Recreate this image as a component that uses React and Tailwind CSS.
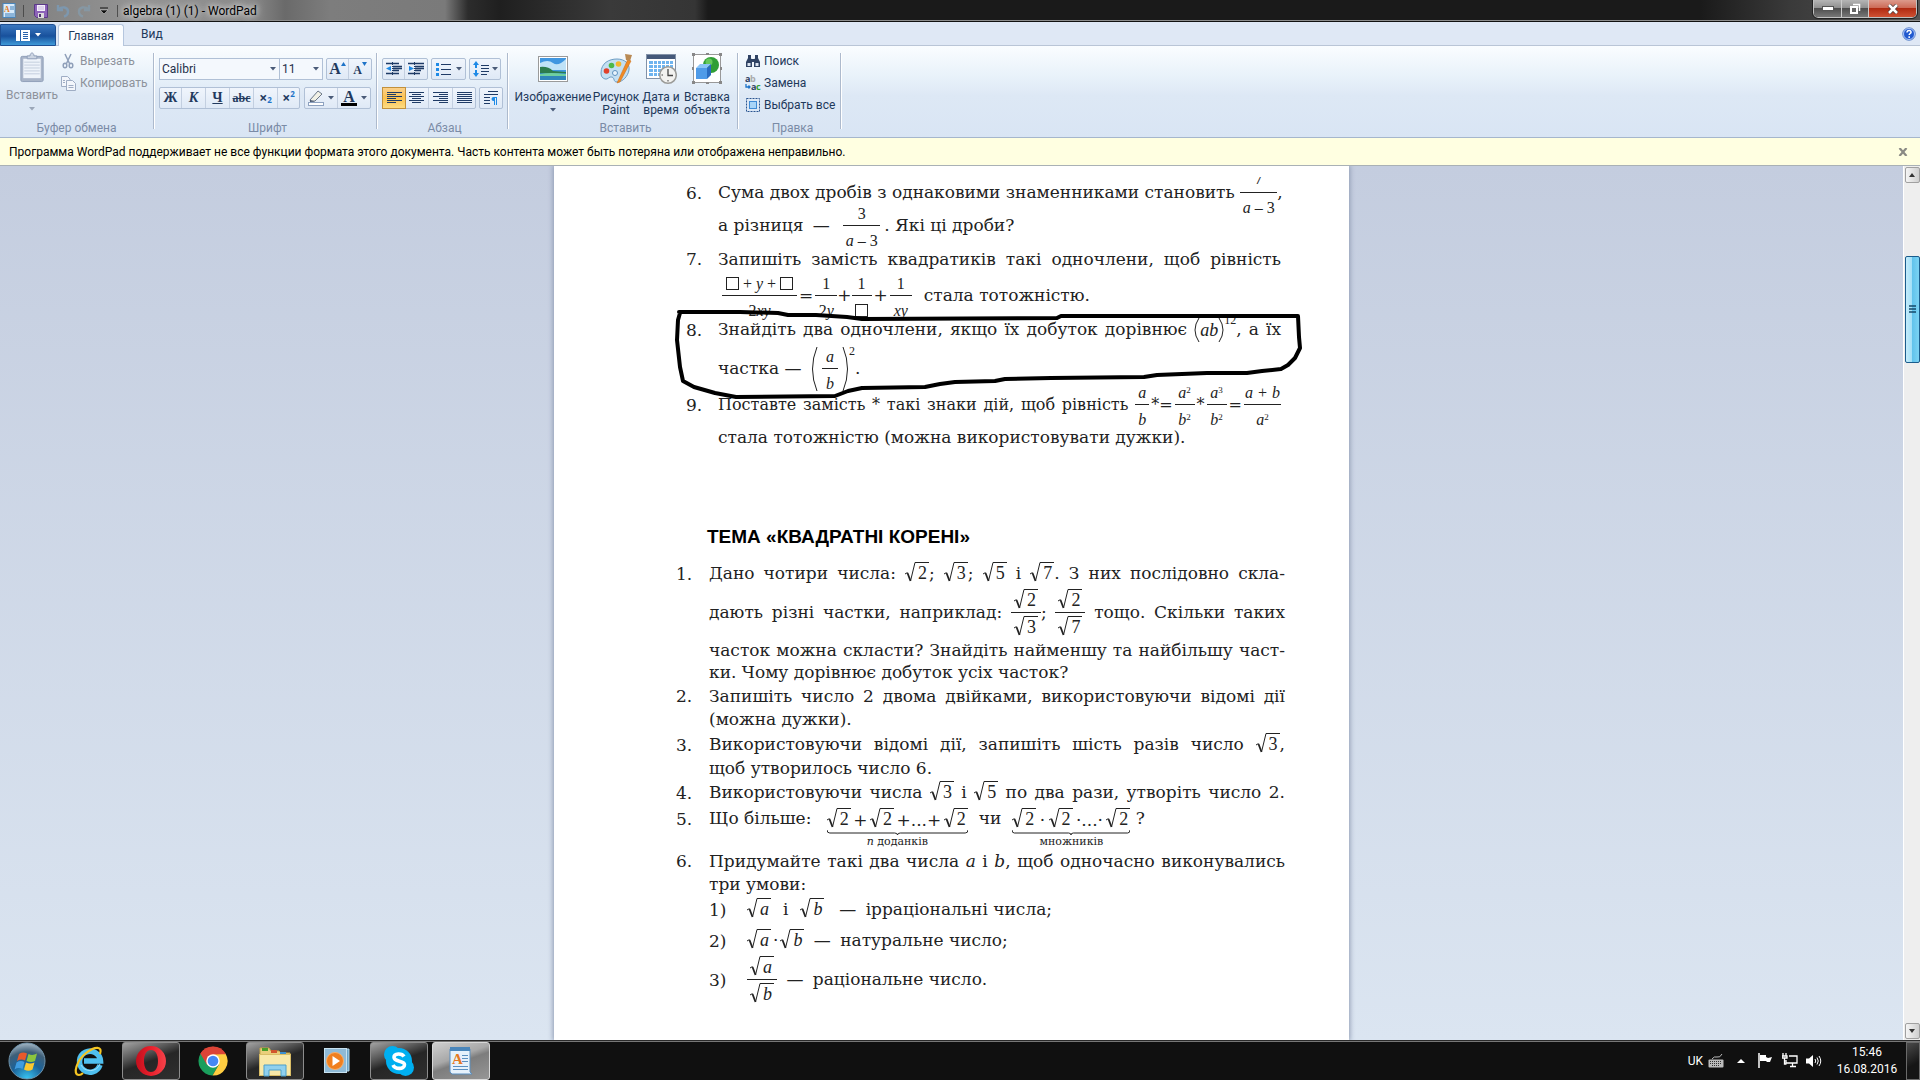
const INK = "M679 312 L740 312 L778 313 L788 315 L816 315 L847 317 L862 319 L1057 318 L1061 316 L1298 316 L1299 337 L1300 348 L1295 358 L1288 365 L1281 369 L1262 371 L1247 373 L1207 373 L1157 375 L1144 377 L1051 378 L1005 379 L995 381 L955 382 L940 384 L925 387 L862 388 L848 391 L835 396 L736 397 L715 393 L694 387 L683 381 L680 367 L677 340 L678 320 L680 313"

function Caret({ className = "text-[#4a5b78]" }) {
  return (
    <svg viewBox="0 0 6 4" className={`w-[6px] h-1 shrink-0 ${className}`}>
      <path d="M0 0h6L3 3.6z" fill="currentColor" />
    </svg>
  )
}

/* ---------- title bar ---------- */

function TitleBar() {
  return (
    <header className="h-[22px] shrink-0 flex items-start justify-between border-b border-[#111] shadow-[inset_0_-1px_0_#8d8d8d] bg-[linear-gradient(90deg,#7d7d7d_0px,#949494_140px,#8a8a8a_250px,#6a6a6a_285px,#7d7d7d_330px,#7a7a7a_445px,#2c2c2c_468px,#1f1f1f_500px,#3a3a3a_610px,#353535_695px,#1a1a1a_708px,#1a1a1a_1700px,#3a3a3a_1790px,#555_1920px)]">
      <div className="flex items-center h-[22px] pl-[2px]">
        <svg viewBox="0 0 14 16" className="w-[14px] h-4">
          <rect x="1" y="0.5" width="12" height="14" fill="#d9ebfa" stroke="#4a86bb" />
          <text x="2" y="9" fontSize="8" fontFamily="Liberation Serif" fontWeight="bold" fill="#e07b28">A</text>
          <path d="M8 4h4M8 6h4M3 11h9M3 13h9" stroke="#3f7fb9" />
        </svg>
        <div className="w-px h-3 bg-[#4c4c4c] ml-[7px]" />
        <button aria-label="Сохранить" className="ml-[10px]">
          <svg viewBox="0 0 14 14" className="w-[14px] h-[14px]">
            <path d="M0.5 0.5h13v13h-11l-2-2z" fill="#8d63b8" stroke="#5b3a87" />
            <rect x="3" y="1" width="8" height="6" fill="#f3eefa" />
            <path d="M4 3h6M4 5h6" stroke="#c9b7df" />
            <rect x="4" y="9" width="6" height="5" fill="#ddd" />
            <rect x="5" y="10" width="2" height="3" fill="#4c3370" />
          </svg>
        </button>
        <button aria-label="Отменить" className="ml-2">
          <svg viewBox="0 0 14 14" className="w-[14px] h-[14px]" fill="none" stroke="#7d97ae" strokeWidth="2.4">
            <path d="M2 1v5h5M2.500 5.500C6 2 12 3 12 7.500c0 2.500-2 4.500-4 5" />
          </svg>
        </button>
        <button aria-label="Вернуть" className="ml-[7px]">
          <svg viewBox="0 0 14 14" className="w-[14px] h-[14px]" fill="none" stroke="#8697a3" strokeWidth="2.4">
            <path d="M12 1v5H7M11.500 5.500C8 2 2 3 2 7.500c0 2.500 2 4.500 4 5" />
          </svg>
        </button>
        <button aria-label="Настройка панели" className="ml-[9px]">
          <svg viewBox="0 0 8 8" className="w-2 h-2">
            <path d="M0 1h8" stroke="#111" />
            <path d="M0 3h8L4 7z" fill="#111" stroke="#ddd" strokeWidth="0.500" />
          </svg>
        </button>
        <div className="w-px h-3 bg-[#4c4c4c] ml-[9px]" />
        <h1 className="ml-[5px] text-xs text-black [text-shadow:0_0_6px_#fff,0_0_8px_#ccc]">algebra (1) (1) - WordPad</h1>
      </div>
      <div className="flex h-[18px] mr-[3px] border border-t-0 border-[#c0c0c0] rounded-b-[5px] overflow-hidden outline outline-[#222]">
        <button aria-label="Свернуть" className="w-[28px] flex justify-center items-center bg-[linear-gradient(#b5b5b5,#8e8e8e_48%,#4e4e4e_50%,#777)] border-r border-[#ccc]">
          <svg viewBox="0 0 12 5" className="w-3 h-[5px]"><rect x="0.500" y="0.500" width="11" height="4" fill="#fff" stroke="#555" /></svg>
        </button>
        <button aria-label="Восстановить" className="w-[27px] flex justify-center items-center bg-[linear-gradient(#b5b5b5,#8e8e8e_48%,#4e4e4e_50%,#777)] border-r border-[#ccc]">
          <svg viewBox="0 0 12 12" className="w-3 h-3">
            <path d="M4 1.500h6.500v6.500" fill="none" stroke="#fff" strokeWidth="1.500" />
            <rect x="2" y="4" width="6" height="6" fill="#666" stroke="#fff" strokeWidth="2" />
          </svg>
        </button>
        <button aria-label="Закрыть" className="w-[47px] flex justify-center items-center bg-[linear-gradient(#dc9a8c,#cd6b58_45%,#b02a12_50%,#cf5133)]">
          <svg viewBox="0 0 12 10" className="w-3 h-[10px]">
            <path d="M2 1l8 8M10 1L2 9" stroke="#4a3a3a" strokeWidth="4" />
            <path d="M2 1l8 8M10 1L2 9" stroke="#fff" strokeWidth="2.500" />
          </svg>
        </button>
      </div>
    </header>
  )
}

/* ---------- ribbon ---------- */

function Tabs() {
  return (
    <nav className="h-[24px] shrink-0 flex items-end bg-[#dfe8f5] border-b border-[#b9c5d6] text-xs text-[#1e395b]">
      <button aria-label="Меню" className="w-14 h-[22px] mb-[-1px] flex items-center justify-center gap-[5px] rounded-tr-[3px] border border-[#1d4f93] bg-[linear-gradient(#3a77bf,#1c55a0_50%,#17509c_55%,#3f9ad8)]">
        <svg viewBox="0 0 14 11" className="w-[14px] h-[11px]">
          <rect width="14" height="11" fill="#fff" />
          <path d="M4.500 0v11" stroke="#2a62ab" />
          <path d="M7 2.500h5M7 4.500h5M7 6.500h5M7 8.500h5" stroke="#2a62ab" />
        </svg>
        <Caret className="text-white" />
      </button>
      <button className="w-[66px] h-[22px] mb-[-1px] ml-[2px] bg-[#fbfdff] border border-b-0 border-[#b5c6de] rounded-t-[3px]">Главная</button>
      <button className="ml-[17px] h-[22px]">Вид</button>
      <button aria-label="Справка" className="ml-auto mr-1 mb-1">
        <svg viewBox="0 0 14 14" className="w-[14px] h-[14px]">
          <circle cx="7" cy="7" r="6.300" fill="#2159cf" stroke="#6f93cf" />
          <circle cx="7" cy="7" r="5.500" fill="none" stroke="#cfe0ff" strokeWidth="0.800" />
          <path d="M5 5.500c0-3 4.500-2.500 4 0C8.800 6.600 7.200 6.500 7.200 8" fill="none" stroke="#fff" strokeWidth="1.500" />
          <rect x="6.400" y="9.300" width="1.600" height="1.600" fill="#fff" />
        </svg>
      </button>
    </nav>
  )
}

function Group({ title, className, children }) {
  return (
    <section className="flex">
      <div className={`flex flex-col justify-between pt-[6px] pb-[1px] ${className}`}>
        <div className="flex-1">{children}</div>
        <h2 className="text-center text-xs leading-4 text-[#7a8ba6]">{title}</h2>
      </div>
      <div className="w-[2px] mt-[7px] mb-2 bg-[#adbacd] border-r border-white" />
    </section>
  )
}

function ButtonBox({ children }) {
  return (
    <div className="flex h-[22px] border border-[#b0c0d6] rounded-[2px] bg-[linear-gradient(#f0f5fc,#dfe9f6)] divide-x divide-[#c3cfe0]">
      {children}
    </div>
  )
}

function Tool({ label, className, children }) {
  return (
    <button aria-label={label} className={`flex items-center justify-center text-[#233a5e] ${className}`}>
      {children}
    </button>
  )
}

function LinesIcon({ rows }) {
  return (
    <svg viewBox="0 0 15 12" className="w-[15px] h-3">
      <path d={rows} stroke="#1f3b66" />
    </svg>
  )
}

function ClipboardGroup() {
  return (
    <Group title="Буфер обмена" className="w-[153px]">
      <div className="flex items-start text-xs text-[#8d929b]">
        <button className="w-[52px] ml-[6px] flex flex-col items-center gap-1">
          <svg viewBox="0 0 26 32" className="w-[26px] h-[31px]">
            <rect x="1.500" y="4.500" width="23" height="26" rx="1.500" fill="#a9b5c9" stroke="#8f9fb9" />
            <rect x="4" y="7" width="18" height="20" fill="#eef3fa" />
            <path d="M5 10.500h16M5 13.500h16M5 16.500h16M5 19.500h16M5 22.500h16" stroke="#c3cddd" />
            <path d="M8 7V4h3c0-4 4-4 4 0h3v3z" fill="#ccd5e3" stroke="#8f9fb9" />
          </svg>
          <span className="leading-4">Вставить</span>
          <Caret className="text-[#9aa6b8]" />
        </button>
        <div className="flex flex-col gap-[6px] ml-[3px]">
          <button className="flex items-center gap-[5px] h-4 mt-[1px]">
            <svg viewBox="0 0 14 16" className="w-[14px] h-4" fill="none" stroke="#8f9fb9" strokeWidth="1.500">
              <path d="M4 1l4.500 9.500M10 1L5.500 10.500" />
              <ellipse cx="4" cy="12.500" rx="1.800" ry="2.300" />
              <ellipse cx="10" cy="12.500" rx="1.800" ry="2.300" />
            </svg>
            Вырезать
          </button>
          <button className="flex items-center gap-[4px] h-4">
            <svg viewBox="0 0 15 15" className="w-[15px] h-[15px]" fill="#f3f6fb" stroke="#9fadc4">
              <path d="M0.500 0.500h6l2.500 2.500v7.500h-8.500z" />
              <path d="M5.500 4.500h6l3 3v7h-9z" />
              <path d="M7.500 9.500h5M7.500 11.500h5M2 4.500h2M2 6.500h2" />
            </svg>
            Копировать
          </button>
        </div>
      </div>
    </Group>
  )
}

function FontGroup() {
  return (
    <Group title="Шрифт" className="w-[221px] pl-1">
      <div className="flex flex-col gap-[7px] pt-[6px]">
        <div className="flex h-[22px]">
          <label className="relative flex items-center">
            <select aria-label="Семейство шрифтов" className="appearance-none w-[121px] h-[22px] pl-[2px] border border-[#b0c0d6] bg-[#f4f8fd] text-xs text-[#1e2f4a]">
              <option>Calibri</option>
            </select>
            <span className="absolute right-1"><Caret /></span>
          </label>
          <label className="relative flex items-center ml-[-1px]">
            <select aria-label="Размер шрифта" className="appearance-none w-[44px] h-[22px] pl-[2px] border border-[#b0c0d6] bg-[#f4f8fd] text-xs text-[#1e2f4a]">
              <option>11</option>
            </select>
            <span className="absolute right-1"><Caret /></span>
          </label>
          <div className="ml-[3px]">
            <ButtonBox>
              <Tool label="Увеличить шрифт" className="w-[22px] items-start">
                <span className="font-[Liberation_Serif] font-bold text-base leading-[20px]">A</span>
                <svg viewBox="0 0 5 4" className="w-[5px] h-1 mt-[3px]"><path d="M0 4h5L2.500 0z" fill="#1e73c8" /></svg>
              </Tool>
              <Tool label="Уменьшить шрифт" className="w-[22px] items-start">
                <span className="font-[Liberation_Serif] font-bold text-xs leading-[22px]">A</span>
                <svg viewBox="0 0 5 4" className="w-[5px] h-1 mt-[3px]"><path d="M0 0h5L2.500 4z" fill="#1e73c8" /></svg>
              </Tool>
            </ButtonBox>
          </div>
        </div>
        <div className="flex gap-1 font-[Liberation_Serif] font-bold text-sm">
          <ButtonBox>
            <Tool label="Полужирный" className="w-[22px]">Ж</Tool>
            <Tool label="Курсив" className="w-6 italic">К</Tool>
            <Tool label="Подчеркнутый" className="w-6 underline">Ч</Tool>
            <Tool label="Зачеркнутый" className="w-6 line-through text-xs">abc</Tool>
            <Tool label="Подстрочный" className="w-6 font-[Open_Sans]">×<sub className="text-[8px] text-[#1e73c8]">2</sub></Tool>
            <Tool label="Надстрочный" className="w-[21px] font-[Open_Sans]">×<sup className="text-[8px] text-[#1e73c8]">2</sup></Tool>
          </ButtonBox>
          <ButtonBox>
            <Tool label="Выделение текста" className="w-[33px] gap-1">
              <svg viewBox="0 0 16 16" className="w-4 h-4">
                <path d="M2 10L10 1l4 3-7 7-4 1z" fill="#f1f1e6" stroke="#6b7788" />
                <path d="M2 10l5 1-5 1z" fill="#44556e" />
                <rect x="0.500" y="12.500" width="15" height="3" fill="#fff" stroke="#8ea2c0" />
              </svg>
              <Caret />
            </Tool>
            <Tool label="Цвет текста" className="w-[32px] gap-1">
              <span className="text-base leading-[13px] w-4 border-b-[3px] border-black">A</span>
              <Caret />
            </Tool>
          </ButtonBox>
        </div>
      </div>
    </Group>
  )
}

function ParagraphGroup() {
  return (
    <Group title="Абзац" className="w-[129px] pl-1">
      <div className="flex flex-col gap-[7px] pt-[6px]">
        <div className="flex gap-[3px]">
          <ButtonBox>
            <Tool label="Уменьшить отступ" className="w-[22px]">
              <svg viewBox="0 0 16 14" className="w-4 h-[14px]">
                <path d="M0 1.500h13M7 4.500h9M7 6.500h9M7 8.500h6M0 11.500h13" stroke="#1f3b66" strokeWidth="1.500" />
                <path d="M6.500 0v14" stroke="#1f3b66" strokeDasharray="1 1" />
                <path d="M5 4v5L0 6.500z" fill="#1e8ae6" />
              </svg>
            </Tool>
            <Tool label="Увеличить отступ" className="w-[22px]">
              <svg viewBox="0 0 16 14" className="w-4 h-[14px]">
                <path d="M0 1.500h16M7 4.500h9M7 6.500h9M7 8.500h6M0 11.500h12" stroke="#1f3b66" strokeWidth="1.500" />
                <path d="M6.500 0v14" stroke="#1f3b66" strokeDasharray="1 1" />
                <path d="M1 4v5l5-2.500z" fill="#1e8ae6" />
              </svg>
            </Tool>
          </ButtonBox>
          <ButtonBox>
            <Tool label="Маркеры" className="w-[33px] gap-1">
              <svg viewBox="0 0 16 13" className="w-4 h-[13px]">
                <path d="M5 1.500h10M5 6.500h10M5 11.500h10" stroke="#1f3b66" />
                <path d="M0 1.500h3M0 6.500h3M0 11.500h3" stroke="#1e8ae6" strokeWidth="3" />
              </svg>
              <Caret />
            </Tool>
          </ButtonBox>
          <ButtonBox>
            <Tool label="Междустрочный интервал" className="w-[30px] gap-[3px]">
              <svg viewBox="0 0 16 16" className="w-4 h-4">
                <path d="M3 0l3 4H4v8h2l-3 4-3-4h2V4H0z" fill="#1e8ae6" />
                <rect x="0" y="7" width="6" height="2" fill="#e8f0fa" />
                <path d="M8 4.500h8M8 7.500h8M8 10.500h8M8 13.500h6" stroke="#1f3b66" />
              </svg>
              <Caret />
            </Tool>
          </ButtonBox>
        </div>
        <div className="flex gap-[3px]">
          <ButtonBox>
            <Tool label="По левому краю" className="w-[24px] m-[-1px] border border-[#c2913c] bg-[linear-gradient(#fbd08a,#fcc250_50%,#fddc82)]">
              <LinesIcon rows="M0 .5h15M0 2.500h9M0 4.500h15M0 6.500h9M0 8.500h15M0 10.500h9" />
            </Tool>
            <Tool label="По центру" className="w-6">
              <LinesIcon rows="M0 .5h15M3 2.500h9M0 4.500h15M3 6.500h9M0 8.500h15M3 10.500h9" />
            </Tool>
            <Tool label="По правому краю" className="w-6">
              <LinesIcon rows="M0 .5h15M6 2.500h9M0 4.500h15M6 6.500h9M0 8.500h15M6 10.500h9" />
            </Tool>
            <Tool label="По ширине" className="w-[22px]">
              <LinesIcon rows="M0 .5h15M0 2.500h15M0 4.500h15M0 6.500h15M0 8.500h15M0 10.500h15" />
            </Tool>
          </ButtonBox>
          <ButtonBox>
            <Tool label="Абзац" className="w-[22px]">
              <svg viewBox="0 0 14 14" className="w-[14px] h-[14px]">
                <path d="M4 .5h10M0 3.500h14M0 6.500h6M0 9.500h6M0 12.500h6" stroke="#1f3b66" />
                <path d="M13 6H9.500a2 2 0 000 4h.5v4h1V7h1v7h1z" fill="#1e8ae6" />
              </svg>
            </Tool>
          </ButtonBox>
        </div>
      </div>
    </Group>
  )
}

function BigButton({ icon, lines, caret, className }) {
  return (
    <button className={`flex flex-col items-center gap-1 text-[#1e395b] ${className}`}>
      {icon}
      <span className="text-xs leading-[13px] pt-[2px]">
        {lines.map(line => (
          <span key={line} className="block whitespace-nowrap">{line}</span>
        ))}
      </span>
      {caret && <Caret />}
    </button>
  )
}

function PictureIcon() {
  return (
    <svg viewBox="0 0 32 32" className="w-8 h-8">
      <rect x="1.500" y="3.500" width="29" height="25" fill="#fff" stroke="#9a9a9a" />
      <rect x="3" y="5" width="26" height="22" fill="#3f96e0" />
      <path d="M3 10q8-4 13 0t13-4v11H3z" fill="#bfe2f7" />
      <path d="M3 14q8-1 13 4l13 1v2H3z" fill="#2c7c4e" />
      <rect x="3" y="20" width="26" height="7" fill="#2f86bb" />
      <path d="M3 21q10-2 26 0v2H3z" fill="#6fcf9f" />
    </svg>
  )
}

function PaletteIcon() {
  return (
    <svg viewBox="0 0 32 32" className="w-8 h-8">
      <path d="M1 20C1 10 9 6 17 6s13 5 12 11-6 12-12 12c-4 0-2-4-5-5s-4 3-7 2-4-3-4-6z" fill="#c3dff2" stroke="#6c9dc4" />
      <circle cx="6.500" cy="18" r="2.800" fill="#e0402a" />
      <circle cx="11.500" cy="12.500" r="2.800" fill="#4db848" />
      <circle cx="18.500" cy="11" r="2.800" fill="#f4b72e" />
      <circle cx="15" cy="20" r="2.500" fill="#e9f4fc" stroke="#5f93c0" />
      <path d="M28 6L17 30l3-1L31 8z" fill="#f08a24" stroke="#c96a14" strokeWidth="0.500" />
      <path d="M25 1l7 1-2 6-4-1z" fill="#b98a54" />
    </svg>
  )
}

function CalendarIcon() {
  return (
    <svg viewBox="0 0 32 32" className="w-8 h-8">
      <rect x="1.500" y="1.500" width="29" height="24" fill="#fff" stroke="#8292a8" />
      <rect x="2" y="2" width="28" height="4" fill="#44597a" />
      <rect x="4" y="8" width="24" height="15" fill="#6fb4ef" />
      <path d="M4 11.500h24M4 15.500h24M4 19.500h24M8.500 8v15M12.500 8v15M16.500 8v15M20.500 8v15M24.500 8v15" stroke="#fff" />
      <circle cx="23" cy="22" r="8.300" fill="#f2f2f0" stroke="#9b9b98" strokeWidth="1.500" />
      <path d="M23 16v6.500h5" fill="none" stroke="#444" strokeWidth="1.300" />
      <path d="M16.500 22h1.500M23 27v1.500" stroke="#444" />
    </svg>
  )
}

function ObjectIcon() {
  return (
    <svg viewBox="0 0 32 32" className="w-8 h-8">
      <rect x="2.500" y="1.500" width="27" height="28" fill="#fff" stroke="#999" />
      <path d="M1 0h3v3H1zM28 0h3v3h-3zM1 28h3v3H1zM28 28h3v3h-3zM15 0h3v2h-3zM15 29h3v2h-3zM1 14h2v3H1zM29 14h2v3h-2z" fill="#888" />
      <circle cx="20" cy="12" r="8" fill="#2f9e36" />
      <circle cx="18" cy="9" r="3.500" fill="#66c95c" />
      <path d="M5 15l4-4h11l-4 4z" fill="#8ac4f7" />
      <rect x="5" y="15" width="11" height="11" fill="#4f9be8" />
      <path d="M16 15l4-4v11l-4 4z" fill="#2a6cc0" />
    </svg>
  )
}

function Ribbon() {
  return (
    <div className="h-[92px] shrink-0 flex bg-[linear-gradient(#fafdff,#e9f2fa_32%,#dde8f5_55%,#d9e5f4)] border-b border-[#a5b6cc]">
      <ClipboardGroup />
      <FontGroup />
      <ParagraphGroup />
      <Group title="Вставить" className="w-[228px] pl-[5px]">
        <div className="flex pt-[1px]">
          <BigButton className="w-[78px]" icon={<PictureIcon />} lines={["Изображение"]} caret />
          <BigButton className="w-12" icon={<PaletteIcon />} lines={["Рисунок", "Paint"]} />
          <BigButton className="w-[42px]" icon={<CalendarIcon />} lines={["Дата и", "время"]} />
          <BigButton className="w-[50px]" icon={<ObjectIcon />} lines={["Вставка", "объекта"]} />
        </div>
      </Group>
      <Group title="Правка" className="w-[101px] pl-[6px]">
        <div className="flex flex-col gap-[6px] pt-px text-xs text-[#1e395b]">
          <button className="flex items-center gap-[3px] h-4">
            <svg viewBox="0 0 16 14" className="w-4 h-[14px]">
              <path d="M3 1h3v3l1 3v6H1V8l2-4zM10 1h3v3l2 4v5H9V7l1-3z" fill="#2f4263" />
              <rect x="6" y="5" width="4" height="3" fill="#2f4263" />
              <path d="M2.500 9h3v3h-3zM10.500 9h3v3h-3z" fill="#dbe4f1" />
            </svg>
            Поиск
          </button>
          <button className="flex items-center gap-[3px] h-4">
            <svg viewBox="0 0 16 16" className="w-4 h-4" fontFamily="Open Sans" fontWeight="bold" fontSize="9">
              <text x="0" y="7" fill="#2f4263">a</text>
              <text x="5" y="7" fill="#aaa">b</text>
              <text x="6" y="15" fill="#2f4263">a</text>
              <text x="11" y="15" fill="#2f9e36">c</text>
              <path d="M1 9v3h4M3.500 10.500L5 12l-1.500 1.500" fill="none" stroke="#1e73c8" strokeWidth="1.300" />
            </svg>
            Замена
          </button>
          <button className="flex items-center gap-[3px] h-4 whitespace-nowrap">
            <svg viewBox="0 0 16 16" className="w-4 h-4">
              <rect x="1.500" y="1.500" width="13" height="13" fill="none" stroke="#2a5590" strokeDasharray="2 1" />
              <rect x="4.500" y="4.500" width="7" height="7" fill="#a8d4f7" stroke="#3f8ad4" />
            </svg>
            Выбрать все
          </button>
        </div>
      </Group>
    </div>
  )
}

function Notice() {
  return (
    <div className="h-7 shrink-0 flex items-center justify-between pl-[9px] pr-3 bg-[#ffffe1] border-b border-[#a9b1b5] text-xs text-black">
      <p>Программа WordPad поддерживает не все функции формата этого документа. Часть контента может быть потеряна или отображена неправильно.</p>
      <button aria-label="Закрыть сообщение">
        <svg viewBox="0 0 10 8" className="w-[10px] h-2"><path d="M1.500 0l7 8M8.500 0l-7 8" stroke="#8a8a84" strokeWidth="2.200" /></svg>
      </button>
    </div>
  )
}

/* ---------- formulas ---------- */

function Frac({ top, bottom, className = "" }) {
  return (
    <span className={`inline-flex flex-col items-stretch text-center align-middle text-base leading-4 font-[Liberation_Serif] ${className}`}>
      <span className="h-6 flex items-center justify-center border-b border-[#222]">{top}</span>
      <span className="h-6 pt-[5px] flex items-center justify-center">{bottom}</span>
    </span>
  )
}

function Sqrt({ children }) {
  return (
    <span className="inline-flex align-middle h-5 leading-5 text-lg font-[Liberation_Serif] mb-1">
      <svg viewBox="0 0 11 20" className="w-[11px] h-5" fill="none" stroke="#222">
        <path d="M0 12l2.500-1.500" />
        <path d="M2.500 11l3 8" strokeWidth="1.800" />
        <path d="M5.500 19L10 .5h1" />
      </svg>
      <span className="border-t border-[#222] px-[2px]">{children}</span>
    </span>
  )
}

function Box() {
  return <span className="inline-block w-[13px] h-[13px] border border-[#222]" />
}

function Dash() {
  return <span className="mx-1">—</span>
}

function Op({ children }) {
  return <span className="mx-[2px]">{children}</span>
}

function Pow({ base, exp }) {
  return <i>{base}<sup className="text-[9px] not-italic leading-none">{exp}</sup></i>
}

function Under({ label, width, children }) {
  return (
    <span className={`relative inline-block align-middle ${width}`}>
      <span className="flex justify-between items-center h-5">{children}</span>
      <svg viewBox="0 0 100 6" preserveAspectRatio="none" className="absolute left-0 top-[20px] w-full h-[6px]">
        <path d="M0 0q0 3 2 3h46q2 0 2 2 0-2 2-2h46q2 0 2-3" fill="none" stroke="#222" vectorEffect="non-scaling-stroke" />
      </svg>
      <span className="absolute left-0 top-[24px] w-full text-center text-[11px] leading-4">{label}</span>
    </span>
  )
}

function Line({ className = "", justify, children }) {
  return (
    <div className={`h-5 flex items-center whitespace-nowrap ${className}`}>
      <p className={justify ? "w-full [text-align-last:justify]" : ""}>{children}</p>
    </div>
  )
}

function Task({ n, className = "grid-cols-[33px_576px]", children }) {
  return (
    <li className={`grid ${className}`}>
      <span className="h-5">{n}.</span>
      <div>{children}</div>
    </li>
  )
}

const NARROW = "grid-cols-[32px_563px]"

function Page() {
  return (
    <article className="relative w-[795px] shrink-0 bg-white text-[#222] font-[DejaVu_Serif,serif] text-[17px] leading-5 shadow-[0_0_5px_1px_#8f9bb3]">
      <ol className="pl-[132px] pt-[17px]">
        <Task n="6" className={NARROW}>
          <Line justify>
            Сума двох дробів з однаковими знаменниками становить{" "}
            <Frac className="w-[37px]" top={<span className="h-2 flex items-end overflow-hidden leading-3">7</span>} bottom={<span><i>a</i> – 3</span>} />,
          </Line>
          <Line className="mt-[13px]">а різниця <Dash /> <Frac className="w-[37px] mx-1" top="3" bottom={<span><i>a</i> – 3</span>} />. Які ці дроби?</Line>
        </Task>
        <li className="h-[13px]" />
        <Task n="7" className={NARROW}>
          <Line justify>Запишіть замість квадратиків такі одночлени, щоб рівність</Line>
          <Line className="mt-[17px]">
            <Frac className="w-[75px] ml-1" top={<span className="flex items-center gap-1"><Box />+ <i>y</i> + <Box /></span>} bottom={<span>2<i>xy</i></span>} />
            <Op>=</Op><Frac className="w-[22px]" top="1" bottom={<span>2<i>y</i></span>} />+<Frac className="w-5" top="1" bottom={<Box />} /><Op>+</Op><Frac className="w-[22px]" top="1" bottom={<i>xy</i>} />
            <span className="ml-3">стала тотожністю.</span>
          </Line>
        </Task>
        <li className="h-[14px]" />
        <Task n="8" className={NARROW}>
          <Line justify>
            Знайдіть два одночлени, якщо їх добуток дорівнює{" "}
            <span className="inline-flex h-5 align-middle items-center font-[Liberation_Serif] text-lg mb-px">
              <svg viewBox="0 0 6 26" className="w-[6px] h-[26px]" fill="none" stroke="#222"><path d="M5 1Q-3 13 5 25" /></svg>
              <i>ab</i>
              <svg viewBox="0 0 6 26" className="w-[6px] h-[26px]" fill="none" stroke="#222"><path d="M1 1Q9 13 1 25" /></svg>
              <span className="self-start text-xs leading-none mt-[-6px]">12</span>
            </span>, а їх
          </Line>
          <Line className="mt-[19px]">
            частка —{" "}
            <span className="inline-flex align-middle items-center ml-1">
              <svg viewBox="0 0 7 46" className="w-[7px] h-[46px]" fill="none" stroke="#222"><path d="M6 1Q-3 23 6 45" /></svg>
              <Frac className="w-4 mx-1" top={<i>a</i>} bottom={<i>b</i>} />
              <svg viewBox="0 0 7 46" className="w-[7px] h-[46px]" fill="none" stroke="#222"><path d="M1 1Q10 23 1 45" /></svg>
              <span className="self-start text-xs leading-none font-[Liberation_Serif]">2</span>
            </span>.
          </Line>
        </Task>
        <li className="h-4" />
        <Task n="9" className={NARROW}>
          <Line justify className="text-base leading-5">
            Поставте замість * такі знаки дій, щоб рівність{" "}
            <Frac className="w-[14px]" top={<i>a</i>} bottom={<i>b</i>} /><Op>*=</Op><Frac className="w-5" top={<Pow base="a" exp="2" />} bottom={<Pow base="b" exp="2" />} /><Op>*</Op><Frac className="w-5" top={<Pow base="a" exp="3" />} bottom={<Pow base="b" exp="2" />} /><Op>=</Op><Frac className="w-[37px]" top={<i>a + b</i>} bottom={<Pow base="a" exp="2" />} />
          </Line>
          <Line className="mt-3">стала тотожністю (можна використовувати дужки).</Line>
        </Task>
      </ol>

      <h2 className="mt-[80px] ml-[153px] h-5 leading-5 text-[19px] font-bold font-[Liberation_Sans] text-black">ТЕМА «КВАДРАТНІ КОРЕНІ»</h2>

      <ol className="pl-[122px] pt-[17px]">
        <Task n="1">
          <Line justify>
            Дано чотири числа: <Sqrt>2</Sqrt>; <Sqrt>3</Sqrt>; <Sqrt>5</Sqrt> і <Sqrt>7</Sqrt>. З них послідовно скла-
          </Line>
          <Line justify className="mt-[19px]">
            дають різні частки, наприклад:{" "}
            <Frac className="w-[30px]" top={<Sqrt>2</Sqrt>} bottom={<Sqrt>3</Sqrt>} />; <Frac className="w-[30px]" top={<Sqrt>2</Sqrt>} bottom={<Sqrt>7</Sqrt>} />
            {" "}тощо. Скільки таких
          </Line>
          <Line justify className="mt-[17px]">часток можна скласти? Знайдіть найменшу та найбільшу част-</Line>
          <Line className="mt-[2px]">ки. Чому дорівнює добуток усіх часток?</Line>
        </Task>
        <li className="h-1" />
        <Task n="2">
          <Line justify>Запишіть число 2 двома двійками, використовуючи відомі дії</Line>
          <Line className="mt-[3px]">(можна дужки).</Line>
        </Task>
        <li className="h-[6px]" />
        <Task n="3">
          <Line justify>Використовуючи відомі дії, запишіть шість разів число <Sqrt>3</Sqrt>,</Line>
          <Line className="mt-[3px]">щоб утворилось число 6.</Line>
        </Task>
        <li className="h-[5px]" />
        <Task n="4">
          <Line justify>Використовуючи числа <Sqrt>3</Sqrt> і <Sqrt>5</Sqrt> по два рази, утворіть число 2.</Line>
        </Task>
        <li className="h-[6px]" />
        <Task n="5">
          <Line>
            Що більше:{" "}
            <Under width="w-[141px] ml-[10px]" label={<><i>n</i> доданків</>}><Sqrt>2</Sqrt>+<Sqrt>2</Sqrt>+...+<Sqrt>2</Sqrt></Under>
            <span className="mx-[11px]">чи</span>
            <Under width="w-[118px]" label="множників"><Sqrt>2</Sqrt>·<Sqrt>2</Sqrt>·...·<Sqrt>2</Sqrt></Under> ?
          </Line>
        </Task>
        <li className="h-[22px]" />
        <Task n="6">
          <Line justify>Придумайте такі два числа <i>a</i> і <i>b</i>, щоб одночасно виконувались</Line>
          <Line className="mt-[3px]">три умови:</Line>
          <ol>
            <li className="flex mt-[6px]"><span className="w-[38px]">1)</span><Line><Sqrt><i>a</i></Sqrt><span className="mx-3">і</span><Sqrt><i>b</i></Sqrt> &nbsp;<Dash /> ірраціональні числа;</Line></li>
            <li className="flex mt-[11px]"><span className="w-[38px]">2)</span><Line><Sqrt><i>a</i></Sqrt><Op>·</Op><Sqrt><i>b</i></Sqrt> <Dash /> натуральне число;</Line></li>
            <li className="flex mt-[19px]"><span className="w-[38px]">3)</span><Line><Frac className="w-[30px]" top={<Sqrt><i>a</i></Sqrt>} bottom={<Sqrt><i>b</i></Sqrt>} /> <Dash /> раціональне число.</Line></li>
          </ol>
        </Task>
      </ol>

      {/* pen mark around task 8 */}
      <svg viewBox="554 166 795 250" className="absolute left-0 top-0 w-full h-[250px] pointer-events-none">
        <path d={INK} fill="none" stroke="#000" strokeWidth="4" strokeLinejoin="round" strokeLinecap="round" />
      </svg>
    </article>
  )
}

function ScrollBar() {
  return (
    <div className="w-[17px] shrink-0 flex flex-col items-center py-px bg-[#eee] border-l border-white">
      <button aria-label="Вверх" className="w-[15px] h-4 flex items-center justify-center border border-[#a0a0a0] rounded-[2px] bg-[linear-gradient(90deg,#f5f5f5,#cfcfcf)]">
        <svg viewBox="0 0 6 4" className="w-[6px] h-1"><path d="M0 4h6L3 0z" fill="#333" /></svg>
      </button>
      <div className="w-[15px] h-[107px] mt-[73px] flex items-center justify-center border border-[#1a5c8c] rounded-[2px] bg-[linear-gradient(90deg,#c4ecfb,#a3dff7_45%,#62c3ec_50%,#7bd3f3)]">
        <svg viewBox="0 0 7 9" className="w-[7px] h-[9px]"><path d="M0 1h7M0 4h7M0 7h7" stroke="#15496b" strokeWidth="1.500" /></svg>
      </div>
      <button aria-label="Вниз" className="mt-auto w-[15px] h-4 flex items-center justify-center border border-[#a0a0a0] rounded-[2px] bg-[linear-gradient(90deg,#f5f5f5,#cfcfcf)]">
        <svg viewBox="0 0 6 4" className="w-[6px] h-1"><path d="M0 0h6L3 4z" fill="#333" /></svg>
      </button>
    </div>
  )
}

/* ---------- taskbar ---------- */

function TaskButton({ label, open, active, children }) {
  let look = "border-transparent"
  if (open) look = "border-[#8c8c8c] bg-[linear-gradient(160deg,#a2a2a2,#5b5b5b_30%,#262626_50%,#2f2f2f)]"
  if (active) look = "border-[#d8d8d8] bg-[linear-gradient(160deg,#cfcfcf,#a8a8a8_40%,#7d7d7d_52%,#969696)]"
  return (
    <button aria-label={label} className={`w-[58px] h-[38px] flex items-center justify-center border rounded-[3px] ${look}`}>
      {children}
    </button>
  )
}

function Taskbar() {
  return (
    <footer className="h-10 shrink-0 flex items-center bg-[#101010] border-t border-[#2a2a2a] shadow-[inset_0_1px_0_#777] text-white">
      <button aria-label="Пуск" className="ml-2">
        <svg viewBox="0 0 38 38" className="w-[38px] h-[38px]">
          <defs>
            <radialGradient id="orb" cx="0.5" cy="1" r="1">
              <stop offset="0" stopColor="#39c8f5" />
              <stop offset="0.45" stopColor="#1b6299" />
              <stop offset="0.75" stopColor="#3f5f78" />
              <stop offset="1" stopColor="#a5b8c6" />
            </radialGradient>
          </defs>
          <circle cx="19" cy="19" r="18" fill="url(#orb)" stroke="#6f93ab" />
          <path d="M11 12q4-2.500 8-.5l-2 7q-4-2-8 .5z" fill="#e8592b" />
          <path d="M20.500 12q4 2 8.500-.5l-2 7.500q-4 2-8.500 0z" fill="#8cc63e" />
          <path d="M8.500 20.500q4-2.500 8-.5l-2 7q-4-2-8 .5z" fill="#3f9ce0" />
          <path d="M18 20.500q4 2 8.500 0l-2 7q-4 2.500-8.500 0z" fill="#fbc830" />
        </svg>
      </button>
      <div className="flex gap-1 ml-[14px]">
        <TaskButton label="Internet Explorer">
          <svg viewBox="0 0 32 32" className="w-8 h-8">
            <path d="M27 20A10.500 10.500 0 1 1 27.500 16H11" fill="none" stroke="#4fc0f0" strokeWidth="5.500" />
            <path d="M27 19A10.500 10.500 0 0 1 8 20" fill="none" stroke="#9fe2fb" strokeWidth="1" />
            <path d="M27 9C30 1 22 1 13 8S-1 30 6 30q2 0 4-2" fill="none" stroke="#f5c522" strokeWidth="2.200" />
          </svg>
        </TaskButton>
        <TaskButton label="Opera" open>
          <svg viewBox="0 0 32 32" className="w-8 h-8">
            <defs>
              <linearGradient id="op" x1="0" x2="1">
                <stop offset="0" stopColor="#c40f1d" /><stop offset="0.5" stopColor="#e8202c" /><stop offset="1" stopColor="#f5424a" />
              </linearGradient>
            </defs>
            <path fillRule="evenodd" d="M16 1a15 15 0 100 30 15 15 0 000-30zm0 4c4.500 0 7 4.500 7 11s-2.500 11-7 11-7-4.500-7-11 2.500-11 7-11z" fill="url(#op)" />
          </svg>
        </TaskButton>
        <TaskButton label="Chrome">
          <svg viewBox="0 0 32 32" className="w-[30px] h-[30px]">
            <path d="M16 16L2.500 8.300A15.500 15.500 0 0129.500 8.300z" fill="#dc4437" />
            <path d="M2.600 8.200A15.500 15.500 0 0015.500 31.500L22.500 19.500 16 16z" fill="#1a9e5c" />
            <path d="M29.400 8.200A15.500 15.500 0 0115.500 31.500L22.500 19.500 16 9z" fill="#ffcd41" />
            <path d="M2.600 8.200A15.500 15.500 0 0129.400 8.700L16 8.700 9.500 20z" fill="#dc4437" />
            <circle cx="16" cy="16" r="7.200" fill="#fff" />
            <circle cx="16" cy="16" r="5.700" fill="#4587f4" />
          </svg>
        </TaskButton>
        <TaskButton label="Проводник" open>
          <svg viewBox="0 0 34 32" className="w-[34px] h-8">
            <path d="M2 5V3h9l2 3h8l2 2h9v22H2z" fill="#e9cf7b" stroke="#c6a548" />
            <path d="M4 3h6v3H4z" fill="#4a9e2b" />
            <path d="M13 5h6v3h-6z" fill="#d2552c" />
            <path d="M22 7h6v2h-6z" fill="#3b8fd0" />
            <rect x="1.500" y="9.500" width="31" height="21" fill="#f8e8a8" stroke="#d9bd66" />
            <path d="M6 31V20h22v11h-5v-6H11v6z" fill="#8fd0ee" stroke="#4d9fc9" />
          </svg>
        </TaskButton>
        <TaskButton label="Проигрыватель">
          <svg viewBox="0 0 28 28" className="w-7 h-7">
            <path d="M8 2h18v22H8z" fill="#6aa5c9" stroke="#b4d8ec" />
            <rect x="1.500" y="1.500" width="22" height="24" fill="#8fbad6" stroke="#c8e2f0" />
            <circle cx="12" cy="14" r="8.500" fill="#f07f1e" stroke="#f9b06a" />
            <path d="M9.500 9l7.500 5-7.500 5z" fill="#fff" />
          </svg>
        </TaskButton>
        <TaskButton label="Skype" open>
          <svg viewBox="0 0 32 32" className="w-8 h-8">
            <circle cx="9.500" cy="9.500" r="8.500" fill="#00aff0" />
            <circle cx="22.500" cy="22.500" r="8.500" fill="#00aff0" />
            <circle cx="16" cy="16" r="13" fill="#00aff0" />
            <path d="M21 11.500C19 8 11 8 11 12.300c0 5 10.500 2.700 10.500 7.400 0 4.800-9.500 4.800-11.500.3" fill="none" stroke="#fff" strokeWidth="3.600" />
          </svg>
        </TaskButton>
        <TaskButton label="WordPad" open active>
          <svg viewBox="0 0 26 30" className="w-[26px] h-[30px]">
            <path d="M2 3h20v23l2 2H4l-2-2z" fill="#e6f1fb" stroke="#5b8fc0" />
            <rect x="2" y="1" width="20" height="4" fill="#4a86bb" />
            <text x="4" y="18" fontSize="15" fontFamily="Liberation Serif" fontWeight="bold" fill="#e57a22">A</text>
            <path d="M14 9.500h6M14 12.500h6M14 15.500h6M5 20.500h15M5 23.500h15" stroke="#5b8fc0" />
          </svg>
        </TaskButton>
      </div>
      <div className="ml-auto flex items-center h-full text-xs">
        <span>UK</span>
        <svg viewBox="0 0 17 14" className="w-[17px] h-[14px] ml-[5px]">
          <path d="M4 5q2-3 5-2t5-3" fill="none" stroke="#bbb" />
          <rect x="0.500" y="5.500" width="15" height="8" rx="1" fill="#bbb" />
          <path d="M2 7.500h12M2 9.500h12M4 11.500h8" stroke="#333" strokeDasharray="1 1" />
        </svg>
        <button aria-label="Скрытые значки" className="ml-3">
          <svg viewBox="0 0 8 4" className="w-2 h-1"><path d="M0 4h8L4 0z" fill="#fff" /></svg>
        </button>
        <svg viewBox="0 0 15 15" className="w-[15px] h-[15px] ml-[13px]">
          <path d="M1 0v15" stroke="#fff" strokeWidth="1.500" />
          <path d="M2 2h6v2l2 1 4-1-2 5H9l-1-1H2z" fill="#fff" />
        </svg>
        <svg viewBox="0 0 16 15" className="w-4 h-[15px] ml-[9px]" fill="none" stroke="#fff" strokeWidth="1.300">
          <path d="M7 3h8v7H4V7M8 13.500h6M10.500 10v3M1 0v3M4 0v3M0 3h5v2H0zM2.500 5v6h2" />
        </svg>
        <svg viewBox="0 0 16 14" className="w-4 h-[14px] ml-[8px]" fill="none" stroke="#fff">
          <path d="M0 4.500h3L7 1v12L3 9.500H0z" fill="#fff" stroke="none" />
          <path d="M9 5q1.500 2 0 4M11 3.500q2.500 3.500 0 7M13 2q3.500 5 0 10" />
        </svg>
        <div className="w-[66px] ml-[12px] text-center leading-[17px]">
          <div>15:46</div>
          <div>16.08.2016</div>
        </div>
        <button aria-label="Свернуть все окна" className="w-[14px] h-[38px] ml-[6px] border border-[#6a6a6a] bg-[linear-gradient(150deg,#4a4a4a,#151515_60%)]" />
      </div>
    </footer>
  )
}

export default function App() {
  return (
    <div className="h-screen flex flex-col overflow-hidden font-[Roboto,sans-serif]">
      <TitleBar />
      <Tabs />
      <Ribbon />
      <Notice />
      <main className="flex-1 min-h-0 flex bg-[linear-gradient(#c4cddf,#dbe5f1)]">
        <div className="flex-1 flex justify-center overflow-hidden">
          <Page />
        </div>
        <ScrollBar />
      </main>
      <Taskbar />
    </div>
  )
}
